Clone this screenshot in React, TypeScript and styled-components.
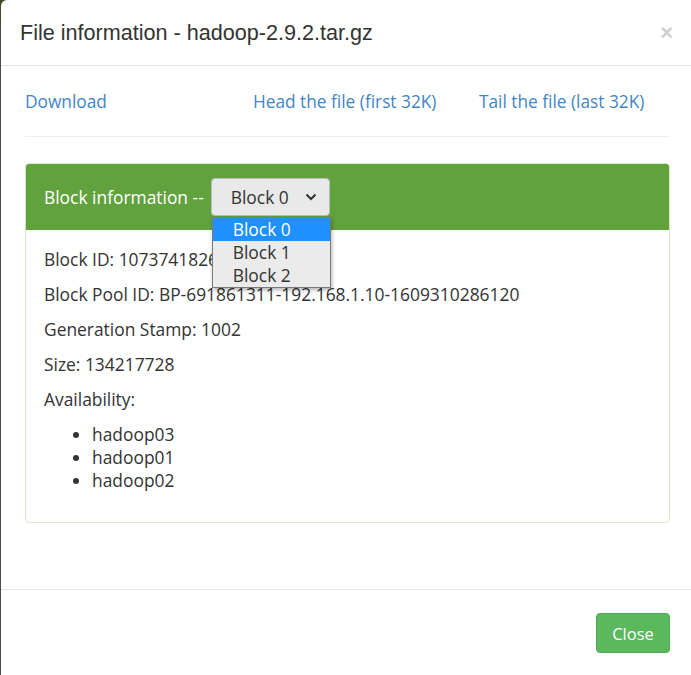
import React from "react";
import styled, { createGlobalStyle } from "styled-components";

const Global = createGlobalStyle`
  html, body { margin: 0; padding: 0; background: #3a3a3a; }
  body { font-family: "Open Sans", "Noto Sans", sans-serif; color: #333; }
  * { box-sizing: border-box; }
`;

const Page = styled.div`
  width: 691px;
  height: 675px;
  padding-left: 1px;
  overflow: hidden;
  background: linear-gradient(#3a4a2a 0, #3a4a2a 22px, #4a4a4a 22px);
`;

const Modal = styled.div`
  width: 700px;
  height: 700px;
  background: #fff;
  border-top-left-radius: 6px;
  display: flex;
  flex-direction: column;
`;

const Header = styled.div`
  height: 66px;
  border-bottom: 1px solid #e5e5e5;
  display: flex;
  align-items: center;
  padding: 0 18px 0 19px;
  width: 690px;
`;

const Title = styled.h4`
  margin: 0;
  flex: 1;
  font-family: "Liberation Sans", Arial, sans-serif;
  font-weight: 400;
  font-size: 21.6px;
  color: #333;
`;

const CloseX = styled.span`
  font-family: "Liberation Sans", Arial, sans-serif;
  font-size: 22px;
  font-weight: 700;
  color: #cfcfcf;
  line-height: 1;
`;

const Body = styled.div`
  width: 690px;
  padding: 0 21px 0 24px;
  height: 523px;
`;

const LinkRow = styled.div`
  display: grid;
  grid-template-columns: 228px 226px auto;
  height: 71px;
  align-items: center;
  padding-top: 1px;
  border-bottom: 1px solid #eee;
`;

const Link = styled.a`
  color: #3f86c8;
  text-decoration: none;
  font-size: 17.3px;
`;

const Panel = styled.div`
  margin-top: 26px;
  border: 1px solid #d6e9c6;
  border-radius: 4px;
  height: 360px;
  width: 645px;
`;

const PanelHeading = styled.div`
  background: #61a23e;
  height: 66px;
  border-radius: 3px 3px 0 0;
  display: flex;
  align-items: center;
  padding: 0 18px;
  color: #fff;
  font-size: 17.4px;
  position: relative;
`;

const SelectBox = styled.div`
  margin-left: 7px;
  width: 119px;
  height: 38px;
  background: #e9e9e9;
  border: 1px solid #bdbdbd;
  border-radius: 4px;
  display: flex;
  align-items: center;
  padding: 0 12px 0 19px;
  color: #333;
  font-size: 17.4px;
  justify-content: space-between;
  position: relative;
`;

const Options = styled.ul`
  position: absolute;
  top: 38px;
  left: 0;
  width: 119px;
  margin: 0;
  padding: 0;
  list-style: none;
  background: #ebebeb;
  border: 1px solid #7a7a7a;
  box-shadow: 1px 2px 4px rgba(0,0,0,0.3);
  z-index: 2;
`;

const Option = styled.li<{ $selected?: boolean }>`
  height: 23px;
  line-height: 23px;
  padding-left: 20px;
  font-size: 17.4px;
  background: ${(p) => (p.$selected ? "#1e90ff" : "transparent")};
  color: ${(p) => (p.$selected ? "#fff" : "#333")};
`;

const PanelBody = styled.div`
  padding: 18px 18px;
  font-size: 17.4px;
`;

const Line = styled.p`
  margin: 0 0 12px;
  line-height: 23px;
`;

const Hosts = styled.ul`
  margin: 0;
  padding-left: 48px;
  line-height: 23px;
`;

const Footer = styled.div`
  width: 690px;
  border-top: 1px solid #e5e5e5;
  display: flex;
  justify-content: flex-end;
  padding: 23px 21px 0 0;
`;

const CloseButton = styled.button`
  width: 74px;
  height: 40px;
  background: #5cb85c;
  border: 1px solid #4cae4c;
  border-radius: 4px;
  color: #fff;
  font-family: "Open Sans", sans-serif;
  font-size: 16.5px;
`;

const Chevron = () => (
  <svg width="12" height="8" viewBox="0 0 12 8">
    <path d="M1.5 1.5 L6 6 L10.5 1.5" fill="none" stroke="#333" strokeWidth="2" />
  </svg>
);

export default function App() {
  return (
    <Page>
      <Global />
      <Modal>
        <Header>
          <Title>File information - hadoop-2.9.2.tar.gz</Title>
          <CloseX>×</CloseX>
        </Header>
        <Body>
          <LinkRow>
            <Link href="#">Download</Link>
            <Link href="#">Head the file (first 32K)</Link>
            <Link href="#">Tail the file (last 32K)</Link>
          </LinkRow>
          <Panel>
            <PanelHeading>
              Block information --
              <SelectBox>
                Block 0
                <Chevron />
                <Options>
                  <Option $selected>Block 0</Option>
                  <Option>Block 1</Option>
                  <Option>Block 2</Option>
                </Options>
              </SelectBox>
            </PanelHeading>
            <PanelBody>
              <Line>Block ID: 1073741826</Line>
              <Line>Block Pool ID: BP-691861311-192.168.1.10-1609310286120</Line>
              <Line>Generation Stamp: 1002</Line>
              <Line>Size: 134217728</Line>
              <Line>Availability:</Line>
              <Hosts>
                <li>hadoop03</li>
                <li>hadoop01</li>
                <li>hadoop02</li>
              </Hosts>
            </PanelBody>
          </Panel>
        </Body>
        <Footer>
          <CloseButton>Close</CloseButton>
        </Footer>
      </Modal>
    </Page>
  );
}
